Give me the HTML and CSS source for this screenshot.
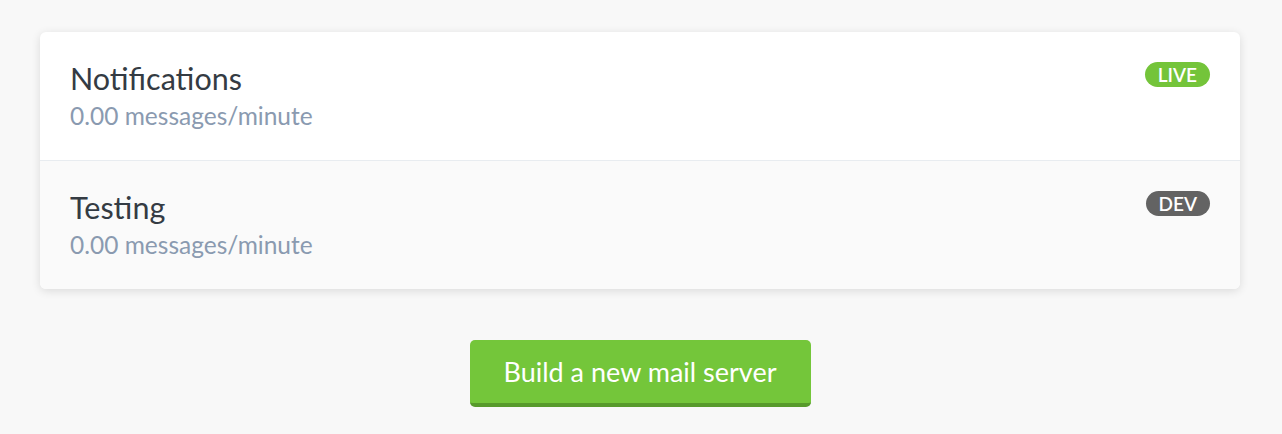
FILE: index.html
```html
<!DOCTYPE html>
<html>
<head>
<meta charset="utf-8">
<link rel="stylesheet" href="styles.css">
</head>
<body>
<div class="page">
  <div class="card">
    <div class="row">
      <div class="info">
        <div class="name">Notifications</div>
        <div class="rate">0.00 messages/minute</div>
      </div>
      <span class="badge live">LIVE</span>
    </div>
    <div class="row alt">
      <div class="info">
        <div class="name">Testing</div>
        <div class="rate">0.00 messages/minute</div>
      </div>
      <span class="badge dev">DEV</span>
    </div>
  </div>
  <div class="actions">
    <a class="btn">Build a new mail server</a>
  </div>
</div>
</body>
</html>
```
FILE: styles.css
```css
html, body {
  margin: 0;
  padding: 0;
  background: #f8f8f8;
}
body {
  font-family: "Lato", "Noto Sans", sans-serif;
}
.page {
  padding: 32px 42px 0 40px;
}
.card {
  background: #fff;
  border-radius: 6px;
  box-shadow: 0 2px 10px rgba(0, 0, 0, 0.12);
  overflow: hidden;
}
.row {
  display: flex;
  justify-content: space-between;
  align-items: flex-start;
  height: 128px;
  box-sizing: border-box;
  padding: 28px 30px 0 30px;
}
.row.alt {
  background: #fafafa;
  border-top: 1px solid #e8ecf0;
  height: 129px;
}
.name {
  font-size: 30.5px;
  line-height: 36px;
  color: #343b43;
}
.rate {
  font-size: 24.5px;
  line-height: 32px;
  margin-top: 4px;
  color: #8a9ab0;
}
.badge {
  margin-top: 2px;
  height: 25px;
  line-height: 25px;
  padding: 0 13px;
  border-radius: 13px;
  color: #fff;
  font-size: 19px;
  font-weight: 600;
}
.badge.live { background: #74c43a; }
.badge.dev { background: #636363; }
.actions {
  display: flex;
  justify-content: center;
  padding-top: 51px;
}
.btn {
  display: inline-block;
  background: #74c63a;
  border-bottom: 4px solid #579a2b;
  border-radius: 5px;
  color: #fff;
  font-size: 27px;
  line-height: 63px;
  padding: 0 34px;
}
```
